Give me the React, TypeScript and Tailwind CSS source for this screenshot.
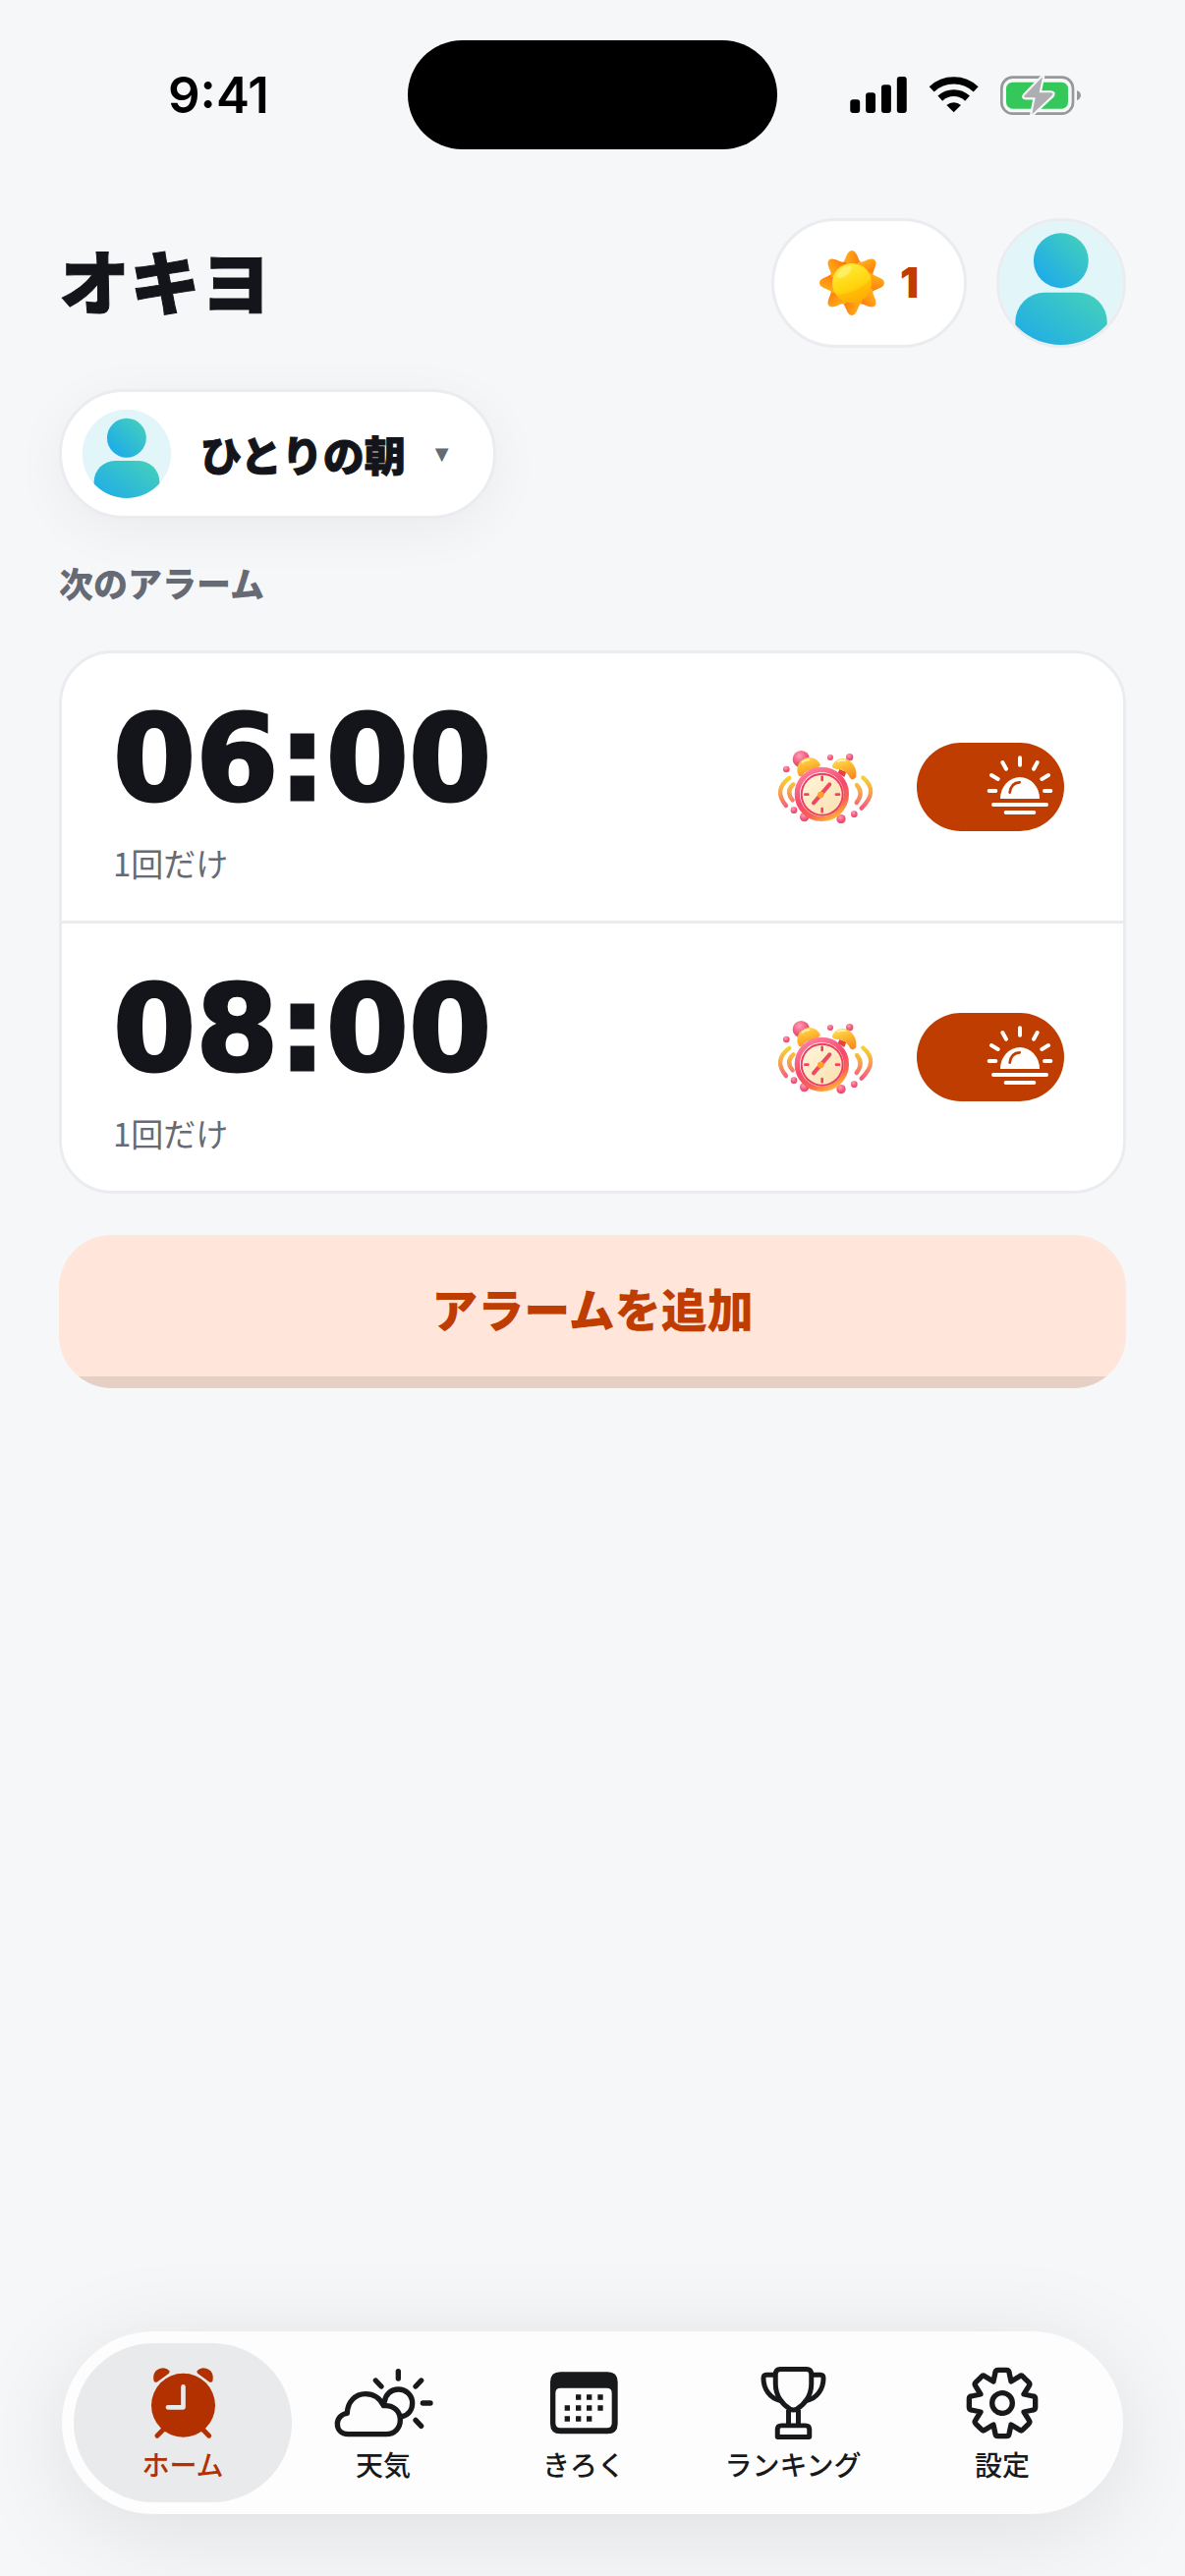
import { useState, type ReactNode } from 'react';

const petals = [0, 45, 90, 135, 180, 225, 270, 315];

function StatusBar() {
  return (
    <div className="grid grid-cols-[1fr_376px_1fr] items-center pt-[41px]">
      <p className="pl-[171px] font-['Inter',sans-serif] text-[51px] font-semibold leading-[60px] text-black">9:41</p>
      <div className="h-[111px] rounded-full bg-black" />
      <div className="flex items-center justify-end gap-[22px] pr-[106px]">
        <svg viewBox="45 41 174 112" className="h-[37px] w-[58px]" aria-label="電波">
          <rect x="45" y="111" width="30" height="42" rx="9" />
          <rect x="93" y="90" width="30" height="63" rx="9" />
          <rect x="141" y="66" width="30" height="87" rx="9" />
          <rect x="189" y="41" width="30" height="112" rx="9" />
        </svg>
        <svg viewBox="285 41 153 112" className="h-[37px] w-[51px]" fill="none" stroke="black" aria-label="Wi-Fi">
          <path d="M294 80A99 99 0 0 1 430 80" strokeWidth="22" />
          <path d="M320 108A61 61 0 0 1 404 108" strokeWidth="21" />
          <path d="M362 151L340 129A32 32 0 0 1 384 129Z" fill="black" stroke="none" />
        </svg>
        <svg viewBox="504 37 246 120" className="h-[40px] w-[82px]" aria-label="充電中">
          <rect x="508" y="42" width="218" height="111" rx="34" fill="none" stroke="#98989b" strokeWidth="8" />
          <rect x="522" y="57" width="189" height="81" rx="20" fill="#34c759" />
          <path d="M738 82Q750 87 750 97T738 113Z" fill="#98989b" />
          <path
            d="M633 41L578 98Q574 104 582 104L611 104L601 155L662 98Q668 90 659 89L623 89Z"
            fill="#aeaeb2"
            stroke="#f6f7f9"
            strokeWidth="13"
            strokeLinejoin="round"
            paintOrder="stroke"
          />
        </svg>
      </div>
    </div>
  );
}

function Avatar({ id, className }: { id: string; className: string }) {
  return (
    <svg viewBox="0 0 379 379" className={className} aria-hidden="true">
      <defs>
        <linearGradient id={id} x1="0" y1="1" x2="1" y2="0">
          <stop offset="0.1" stopColor="#1caaea" />
          <stop offset="0.95" stopColor="#45d0bb" />
        </linearGradient>
        <clipPath id={`${id}-clip`}>
          <circle cx="189" cy="189" r="190" />
        </clipPath>
      </defs>
      <g clipPath={`url(#${id}-clip)`}>
        <rect width="379" height="379" fill="#e2f5f8" />
        <circle cx="189" cy="121" r="84" fill={`url(#${id})`} />
        <rect x="49" y="219" width="281" height="200" rx="90" fill={`url(#${id})`} />
      </g>
    </svg>
  );
}

function SunIcon() {
  return (
    <svg viewBox="-99 -99 198 198" className="size-[66px]" aria-hidden="true">
      <defs>
        <linearGradient id="ray" x1="0" y1="0" x2="1" y2="0.3">
          <stop offset="0.1" stopColor="#ffb21c" />
          <stop offset="0.5" stopColor="#ff9a14" />
          <stop offset="1" stopColor="#ff7409" />
        </linearGradient>
        <linearGradient id="sun-face" x1="0.3" y1="0" x2="0.7" y2="1">
          <stop offset="0" stopColor="#ffec3d" />
          <stop offset="0.55" stopColor="#ffd60f" />
          <stop offset="1" stopColor="#ffae05" />
        </linearGradient>
      </defs>
      {petals.map((angle) => (
        <path
          key={angle}
          d="M-32-58C-18-66-17-99 0-99C17-99 18-66 32-58L0 0Z"
          fill="url(#ray)"
          transform={`rotate(${angle})`}
        />
      ))}
      <circle r="60" fill="url(#sun-face)" />
      <path d="M58-15A60 60 0 0 1-48 36C5 32 45 10 58-15Z" fill="#ffa800" opacity="0.4" />
      <ellipse cx="-24" cy="-34" rx="26" ry="13" fill="#fff27a" opacity="0.7" transform="rotate(-35 -24 -34)" />
    </svg>
  );
}

function AlarmClockIcon({ id }: { id: string }) {
  const body = `url(#${id}-body)`;
  const bell = `url(#${id}-bell)`;
  const wave = `url(#${id}-wave)`;
  const dot = `url(#${id}-dot)`;

  return (
    <svg viewBox="0 0 348 276" className="h-[92px] w-[116px]" aria-hidden="true">
      <defs>
        <linearGradient id={`${id}-body`} x1="0.2" y1="0" x2="0.7" y2="1">
          <stop offset="0" stopColor="#ff7fa0" />
          <stop offset="0.5" stopColor="#f5486c" />
          <stop offset="0.8" stopColor="#fb6350" />
          <stop offset="1" stopColor="#ffaf38" />
        </linearGradient>
        <linearGradient id={`${id}-bell`} x1="0.2" y1="0" x2="0.6" y2="1">
          <stop offset="0" stopColor="#ffdf5b" />
          <stop offset="0.5" stopColor="#fdb62d" />
          <stop offset="1" stopColor="#f78a2c" />
        </linearGradient>
        <linearGradient id={`${id}-wave`} gradientUnits="userSpaceOnUse" x1="0" y1="105" x2="0" y2="205">
          <stop offset="0" stopColor="#f6d52a" />
          <stop offset="0.45" stopColor="#f8a94b" />
          <stop offset="1" stopColor="#f4587e" />
        </linearGradient>
        <linearGradient id={`${id}-face`} x1="0" y1="0" x2="1" y2="1">
          <stop offset="0" stopColor="#fff6dc" />
          <stop offset="1" stopColor="#fadfae" />
        </linearGradient>
        <radialGradient id={`${id}-dot`} cx="0.4" cy="0.3">
          <stop offset="0" stopColor="#ff9db5" />
          <stop offset="1" stopColor="#ef4f74" />
        </radialGradient>
      </defs>
      <circle cx="100" cy="53" r="26" fill={dot} />
      <circle cx="55" cy="84" r="10" fill={dot} />
      <circle cx="189" cy="48" r="9" fill={dot} />
      <circle cx="248" cy="47" r="11" fill={dot} />
      <circle cx="78" cy="209" r="10" fill={dot} />
      <circle cx="262" cy="221" r="10" fill={dot} />
      <g fill="none" stroke={wave} strokeLinecap="round" strokeWidth="13">
        <path d="M64 110Q14 147 54 195" />
        <path d="M76 130Q52 152 74 178" />
        <path d="M289 110Q338 150 284 203" />
        <path d="M270 132Q292 158 269 186" />
      </g>
      <circle cx="110" cy="230" r="14" fill={dot} />
      <circle cx="222" cy="236" r="14" fill={dot} />
      <path d="M112 96L131 84L138 96L120 106ZM217 84L238 92L232 108L212 96Z" fill="#e2453f" />
      <path d="M90 98C82 66 106 48 128 48Q151 50 159 72Q150 84 126 86Q108 92 104 104Q94 110 90 98Z" fill={bell} />
      <path d="M194 76C202 52 228 44 248 58Q272 78 268 108Q258 120 250 112Q240 90 218 84Q200 86 194 76Z" fill={bell} />
      <circle cx="163" cy="160" r="75" fill="none" stroke={body} strokeWidth="16" />
      <circle cx="164" cy="161" r="66" fill="#ea3d62" />
      <circle cx="164" cy="161" r="60" fill={`url(#${id}-face)`} />
      <path d="M164 107v10M164 204v10M112 161h9M207 161h9" stroke="#f0435f" strokeWidth="8" strokeLinecap="round" />
      <path d="M138 187L187 130" stroke="#ee4961" strokeWidth="12" strokeLinecap="round" />
      <circle cx="160" cy="162" r="10" fill="#ffa02b" />
      <path d="M104 62Q112 54 124 55M212 60Q224 54 234 58" fill="none" stroke="#fff3b3" strokeWidth="5" strokeLinecap="round" />
    </svg>
  );
}

function AlarmRow({ id, time, note }: { id: string; time: string; note: string }) {
  const [enabled, setEnabled] = useState(true);

  return (
    <li className="flex items-center py-[38px] pl-[52px] pr-[60px]">
      <div className="flex-1">
        <p className="font-['DejaVu_Sans',sans-serif] text-[121px] font-bold leading-[140px] [-webkit-text-stroke:3px_#14151a]">
          {time}
        </p>
        <p className="mt-[14px] text-[33px] leading-[42px] text-[#666a75]">{note}</p>
      </div>
      <AlarmClockIcon id={id} />
      <label className="ml-[35px] cursor-pointer">
        <input
          type="checkbox"
          className="peer sr-only"
          checked={enabled}
          onChange={(e) => setEnabled(e.target.checked)}
          aria-label={`${time}のアラーム`}
        />
        <span className="block h-[90px] w-[150px] rounded-full bg-[#d5d7dc] peer-checked:bg-[#bf3d00] peer-focus-visible:ring-4">
          <svg viewBox="0 0 450 270" className="size-full" stroke="white" strokeLinecap="round" fill="none">
            <path d="M255 171A60 66 0 0 1 375 171Z" fill="white" stroke="none" />
            <path d="M284 152Q288 122 314 121" stroke="#bf3d00" strokeWidth="8" />
            <path
              d="M315 46v22M262 60l11 20M368 60l-11 20M228 99l20 12M402 99l-20 12M221 147h20M390 147h19M234 189h162M272 213h86"
              strokeWidth="12"
            />
          </svg>
        </span>
      </label>
    </li>
  );
}

function NavItem({ label, active, children }: { label: string; active?: boolean; children: ReactNode }) {
  return (
    <a
      href="#"
      aria-current={active ? 'page' : undefined}
      className={
        active
          ? 'flex h-[162px] flex-col items-center justify-center gap-1 rounded-full bg-[#e9eaeb] font-medium text-[#b33100]'
          : 'flex h-[162px] flex-col items-center justify-center gap-1 font-medium text-[#18191b]'
      }
    >
      <span className="flex h-20 items-center">{children}</span>
      <span className="whitespace-nowrap text-[28px] leading-[36px]">{label}</span>
    </a>
  );
}

function BottomNav() {
  return (
    <nav className="mx-[63px] mb-[63px] mt-auto grid grid-cols-[222fr_186fr_222fr_204fr_222fr] rounded-full bg-[#fdfdfe] p-3 shadow-[0_16px_100px_rgba(0,0,0,0.1)]">
      <NavItem label="ホーム" active>
        <svg viewBox="276 136 202 222" className="h-[74px] w-[67px]" fill="currentColor">
          <circle cx="377" cy="254" r="98" />
          <path d="M287 180C280 150 300 139 317 139Q328 140 335 148Q336 155 330 158L297 182Q289 184 287 180ZM467 180C474 150 454 139 437 139Q426 140 419 148Q418 155 424 158L457 182Q465 184 467 180Z" />
          <path d="M297 347l20-20M456 347l-20-20" stroke="currentColor" strokeWidth="15" strokeLinecap="round" />
          <path d="M377 197v63h-47" fill="none" stroke="#e9eaeb" strokeWidth="14" strokeLinecap="round" strokeLinejoin="round" />
        </svg>
      </NavItem>
      <NavItem label="天気">
        <svg viewBox="841 144 306 216" className="h-[72px] w-[102px]" fill="none" stroke="currentColor" strokeWidth="16" strokeLinecap="round" strokeLinejoin="round">
          <path d="M887 347C865 347 854 332 854 315C854 298 867 285 884 283C885 249 908 224 940 224C965 224 984 237 995 260C1026 257 1046 277 1046 303C1046 329 1028 347 1003 347Z" />
          <path d="M998 248C1001 225 1018 210 1040 210C1065 210 1083 229 1083 252C1083 273 1071 288 1052 293" />
          <path d="M1040 155v22M971 183l17 18M1110 183l-17 18M1115 252h23M1093 304l17 18" />
        </svg>
      </NavItem>
      <NavItem label="きろく">
        <svg viewBox="362 158 210 192" className="h-[64px] w-[70px]" fill="currentColor">
          <path
            fillRule="evenodd"
            d="M396 159H540Q571 159 571 190V317Q571 348 540 348H396Q365 348 365 317V190Q365 159 396 159ZM396 208Q381 208 381 223V315Q381 330 396 330H538Q553 330 553 315V223Q553 208 538 208Z"
          />
          <path d="M451 228v16M484 228v16M518 228v16M417 261v16M451 261v16M484 261v16M518 261v16M417 294v16M451 294v16M484 294v16" stroke="currentColor" strokeWidth="16" />
        </svg>
      </NavItem>
      <NavItem label="ランキング">
        <svg viewBox="1003 140 202 228" className="h-[76px] w-[67px]" fill="none" stroke="currentColor" strokeWidth="15" strokeLinejoin="round">
          <path d="M1049 167Q1049 150 1064 150H1144Q1159 150 1159 167V195C1159 232 1137 259 1115 272Q1104 278 1093 272C1071 259 1049 232 1049 195Z" />
          <path d="M1049 167H1021Q1012 167 1012 178C1012 211 1032 241 1066 247M1159 167H1187Q1196 167 1196 178C1196 211 1176 241 1142 247" />
          <path d="M1089 275V323M1119 275V323M1055 358V335Q1055 323 1068 323H1140Q1153 323 1153 335V358Z" />
        </svg>
      </NavItem>
      <NavItem label="設定">
        <svg viewBox="-111 -111 222 222" className="size-[74px]" fill="none" stroke="currentColor" strokeWidth="16" strokeLinejoin="round">
          <path d="M-27-66L-21-94Q-20-101-13-101H13Q20-101 21-94L27-66L53-82Q59-86 64-80L80-64Q86-59 82-53L66-27L94-21Q101-20 101-13V13Q101 20 94 21L66 27L82 53Q86 59 80 64L64 80Q59 86 53 82L27 66L21 94Q20 101 13 101H-13Q-20 101-21 94L-27 66L-53 82Q-59 86-64 80L-80 64Q-86 59-82 53L-66 27L-94 21Q-101 20-101 13V-13Q-101-20-94-21L-66-27L-82-53Q-86-59-80-64L-64-80Q-59-86-53-82Z" />
          <circle r="31" />
        </svg>
      </NavItem>
    </nav>
  );
}

export default function App() {
  return (
    <div className="flex min-h-screen flex-col bg-[#f6f7f9] font-['Noto_Sans_CJK_JP',sans-serif] text-[#14151a]">
      <StatusBar />

      <main className="px-[60px] pb-[60px] pt-[70px]">
        <header className="flex items-center gap-[30px]">
          <h1 className="flex-1 pb-2 text-[72px] font-black leading-[90px] [-webkit-text-stroke:1px_#14151a]">オキヨ</h1>
          <button className="flex h-[132px] items-center gap-4 rounded-full border-3 border-[#ebecf0] bg-white px-[46px]">
            <SunIcon />
            <span className="font-['Inter',sans-serif] text-[42px] font-black leading-[48px] text-[#bf3d00]">1</span>
          </button>
          <button aria-label="プロフィール" className="size-[132px] rounded-full border-3 border-[#ebecf0]">
            <Avatar id="profile" className="size-full" />
          </button>
        </header>

        <button className="mt-[42px] flex h-[132px] items-center rounded-full border-3 border-[#ebecf0] bg-white pl-[21px] pr-[45px] shadow-[0_12px_54px_rgba(20,21,26,0.05)]">
          <Avatar id="group" className="size-[90px]" />
          <span className="ml-[30px] text-[42px] font-black leading-[60px] [-webkit-text-stroke:1px_#14151a]">ひとりの朝</span>
          <span className="ml-[30px] font-['DejaVu_Sans',sans-serif] text-[18px] leading-[30px] text-[#666a75]">▼</span>
        </button>

        <h2 className="mb-12 mt-11 text-[35px] font-black leading-[42px] text-[#666a75]">次のアラーム</h2>

        <ul className="divide-y-3 divide-[#ebecf0] rounded-[54px] border-3 border-[#ebecf0] bg-white">
          <AlarmRow id="alarm-six" time="06:00" note="1回だけ" />
          <AlarmRow id="alarm-eight" time="08:00" note="1回だけ" />
        </ul>

        <button className="mt-[42px] h-[156px] w-full rounded-[54px] bg-[linear-gradient(to_top,#e6cfc4_12px,#ffe5da_12px)] pb-2 text-[47px] font-black leading-[60px] text-[#bf3d00]">
          アラームを追加
        </button>
      </main>

      <BottomNav />
    </div>
  );
}
